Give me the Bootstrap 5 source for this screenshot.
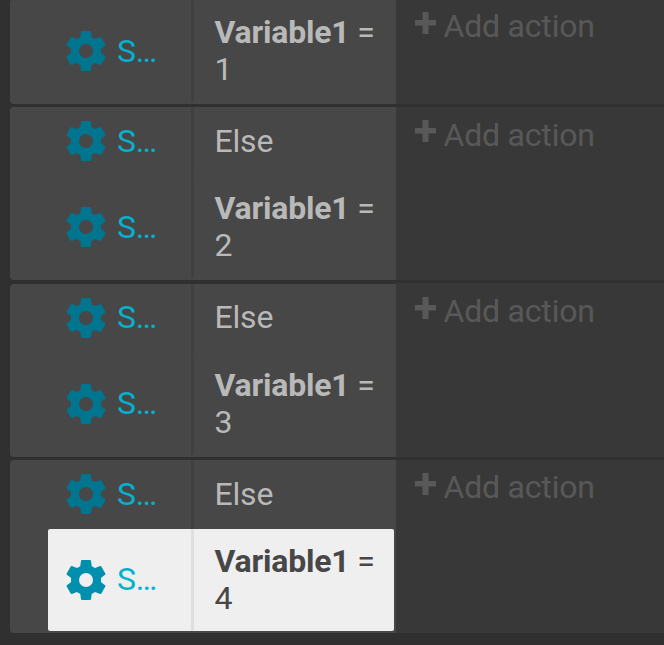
<!DOCTYPE html>
<html lang="en">
<head>
<meta charset="utf-8">
<meta name="viewport" content="width=device-width, initial-scale=1">
<title>Event sheet</title>
<link href="https://cdn.jsdelivr.net/npm/bootstrap@5.3.0/dist/css/bootstrap.min.css" rel="stylesheet">
<style>
body { background: #303030; color: #b9b9b9; font-family: Roboto, "Liberation Sans", sans-serif; font-size: 32px; line-height: 37px; letter-spacing: -.2px; height: 645px; }
.sheet { padding-left: 10px; }
.event-block { height: 173px; margin-bottom: 3px; }
.event-block.first { height: 104px; }
.event-block.tall { height: 174px; }
.tall .conditions { margin-top: 1px; }
.conditions { width: 386px; background: #474747; border-radius: 4px 0 0 4px; padding: 0 2px 2px 38px; }
.first .conditions { border-top-left-radius: 2px; }
.condition { height: 102px; border-radius: 2px; }
.condition.else-row { height: 69px; }
.object-cell { width: 146px; padding-left: 14px; border-right: 3px solid #404040; border-radius: 2px; color: #06b1cd; }
.object-cell svg { width: 48px; height: 48px; fill: #00758f; margin-bottom: 1px; }
.object-name { width: 42px; margin-left: 7px; }
.tall .object-name { margin-bottom: 2px; }
.condition-text { padding: 14px 0 0 20.5px; }
.else-row .condition-text { padding-top: 16px; }
.tall .else-row .condition-text { padding-top: 15px; }
.selected { background: #efefef; color: #474747; }
.selected .object-cell { border-right-color: #dedede; }
.selected svg { fill: #018fae; }
.selected .object-name { margin-bottom: 2px; }
.actions { background: #383838; color: #585858; padding: 8px 0 0 19px; }
.actions svg { width: 21px; height: 22px; fill: #585858; margin: 5px 7.500px 0 0; }
.actions span { padding-top: 1px; }
.second .actions span { padding-top: 2px; }
.tall .actions svg { margin-top: 6px; }
.tall .actions span { padding-top: 2px; }
.first .actions { padding-top: 7px; }
</style>
<script src="https://cdn.jsdelivr.net/npm/bootstrap@5.3.0/dist/js/bootstrap.bundle.min.js"></script>
</head>
<body class="overflow-hidden">
<svg class="d-none" xmlns="http://www.w3.org/2000/svg">
  <symbol id="cog" viewBox="0 0 24 24"><path d="M12 15.5A3.5 3.5 0 0 1 8.5 12 3.5 3.5 0 0 1 12 8.5a3.5 3.5 0 0 1 3.5 3.5 3.5 3.5 0 0 1-3.5 3.5m7.43-2.53c.04-.32.07-.64.07-.97s-.03-.66-.07-1l2.11-1.63c.19-.15.24-.42.12-.64l-2-3.46c-.12-.22-.39-.31-.61-.22l-2.49 1c-.52-.39-1.06-.73-1.69-.98l-.37-2.65A.506.506 0 0 0 14 2h-4c-.25 0-.46.18-.5.42l-.37 2.65c-.63.25-1.17.59-1.69.98l-2.49-1c-.22-.09-.49 0-.61.22l-2 3.46c-.13.22-.07.49.12.64L4.57 11c-.04.34-.07.67-.07 1s.03.65.07.97l-2.11 1.66c-.19.15-.25.42-.12.64l2 3.46c.12.22.39.3.61.22l2.49-1.01c.52.4 1.06.74 1.69.99l.37 2.65c.04.24.25.42.5.42h4c.25 0 .46-.18.5-.42l.37-2.65c.63-.26 1.17-.59 1.69-.99l2.49 1.01c.22.08.49 0 .61-.22l2-3.46c.12-.22.07-.49-.12-.64z"/></symbol>
  <symbol id="plus" viewBox="0 0 21 22"><path d="M7.500 0h6v8H21v5.500h-7.500V22h-6v-8.500H0V8h7.500z"/></symbol>
</svg>
<main class="sheet">
  <section class="event-block first d-flex">
    <div class="conditions">
      <div class="condition d-flex">
        <div class="object-cell d-flex align-items-center"><svg><use href="#cog"/></svg><span class="object-name">S…</span></div>
        <div class="condition-text"><b>Variable1</b> =<br>1</div>
      </div>
    </div>
    <div class="actions flex-grow-1 d-flex align-items-start"><svg><use href="#plus"/></svg><span>Add action</span></div>
  </section>
  <section class="event-block second d-flex">
    <div class="conditions">
      <div class="condition else-row d-flex">
        <div class="object-cell d-flex align-items-center"><svg><use href="#cog"/></svg><span class="object-name">S…</span></div>
        <div class="condition-text">Else</div>
      </div>
      <div class="condition d-flex">
        <div class="object-cell d-flex align-items-center"><svg><use href="#cog"/></svg><span class="object-name">S…</span></div>
        <div class="condition-text"><b>Variable1</b> =<br>2</div>
      </div>
    </div>
    <div class="actions flex-grow-1 d-flex align-items-start"><svg><use href="#plus"/></svg><span>Add action</span></div>
  </section>
  <section class="event-block tall d-flex">
    <div class="conditions">
      <div class="condition else-row d-flex">
        <div class="object-cell d-flex align-items-center"><svg><use href="#cog"/></svg><span class="object-name">S…</span></div>
        <div class="condition-text">Else</div>
      </div>
      <div class="condition d-flex">
        <div class="object-cell d-flex align-items-center"><svg><use href="#cog"/></svg><span class="object-name">S…</span></div>
        <div class="condition-text"><b>Variable1</b> =<br>3</div>
      </div>
    </div>
    <div class="actions flex-grow-1 d-flex align-items-start"><svg><use href="#plus"/></svg><span>Add action</span></div>
  </section>
  <section class="event-block d-flex">
    <div class="conditions">
      <div class="condition else-row d-flex">
        <div class="object-cell d-flex align-items-center"><svg><use href="#cog"/></svg><span class="object-name">S…</span></div>
        <div class="condition-text">Else</div>
      </div>
      <div class="condition selected d-flex">
        <div class="object-cell d-flex align-items-center"><svg><use href="#cog"/></svg><span class="object-name">S…</span></div>
        <div class="condition-text"><b>Variable1</b> =<br>4</div>
      </div>
    </div>
    <div class="actions flex-grow-1 d-flex align-items-start"><svg><use href="#plus"/></svg><span>Add action</span></div>
  </section>
</main>
</body>
</html>
